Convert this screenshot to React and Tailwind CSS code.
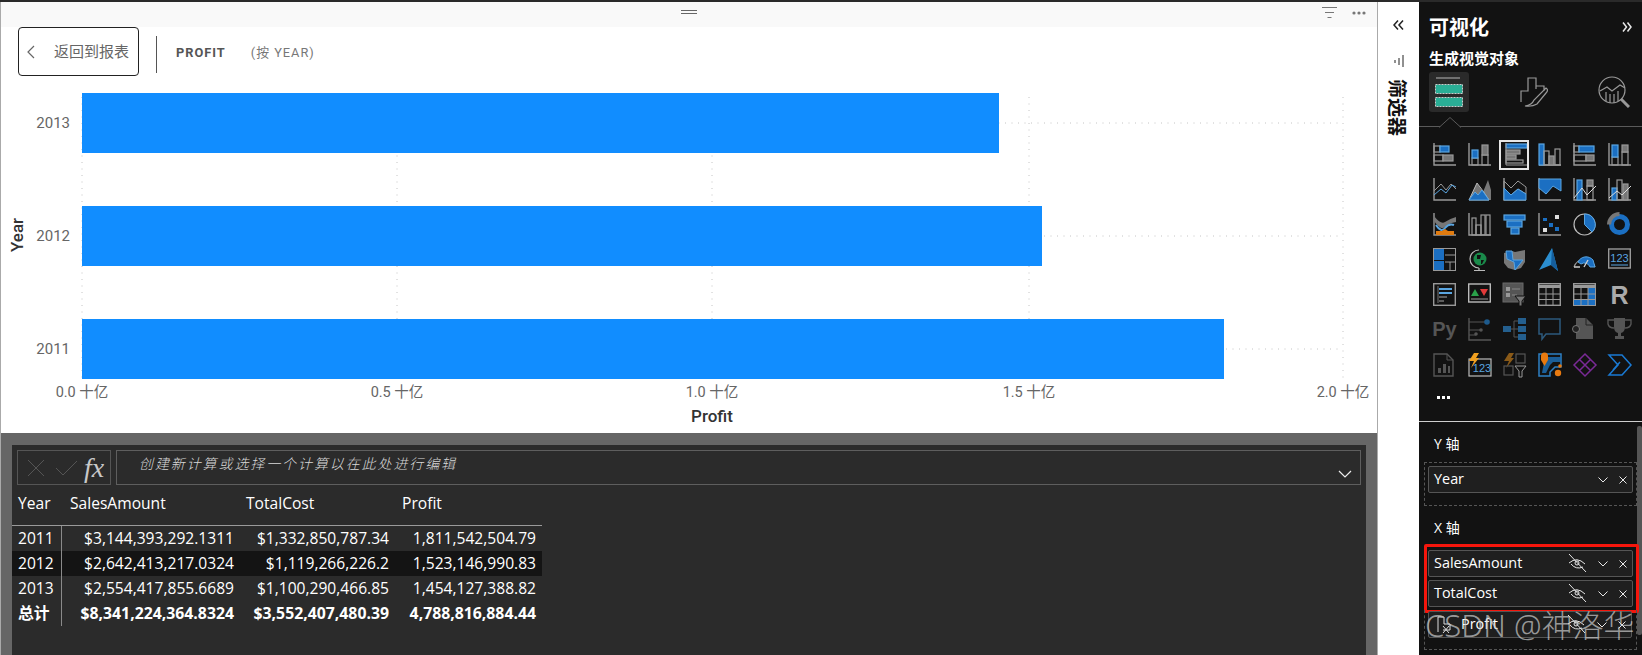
const G = '#999999', F = '#777777', B = '#1b6fc2', L = '#5aa5e0', D = '#555555';
const sans = "font-['Open_Sans','Noto_Sans_CJK_SC',sans-serif]";

const Ax = () => <path d="M1 0V22H23" fill="none" stroke={G} strokeWidth="1.4" />;
const R = ({ x, y, w, h, f = 'none', s = G }) => <rect x={x} y={y} width={w} height={h} fill={f} stroke={s} strokeWidth="1.2" />;

const icons = [
  <><Ax /><R x={1} y={3} w={6} h={6} /><R x={7} y={3} w={9} h={6} f={B} s={L} /><R x={1} y={12} w={9} h={6} /><R x={10} y={12} w={10} h={6} f={F} /></>,
  <><Ax /><R x={4} y={15} w={6} h={7} /><R x={4} y={7} w={6} h={8} f={B} s={L} /><R x={14} y={12} w={6} h={10} /><R x={14} y={2} w={6} h={10} f={F} /></>,
  <><R x={3} y={1} w={21} h={4} f={B} s={L} /><R x={3} y={7} w={14} h={4} f={F} /><R x={3} y={12} w={10} h={4} f={F} /><R x={3} y={17} w={17} h={3} /><path d="M3 0V22H25" fill="none" stroke={G} strokeWidth="1" /></>,
  <><path d="M1 22H23" stroke="#ccc" strokeWidth="1.2" /><R x={1} y={1} w={5} h={21} f={B} s={L} /><R x={6} y={8} w={5} h={14} /><R x={11} y={13} w={5} h={9} f={F} /><R x={17} y={6} w={5} h={16} /></>,
  <><Ax /><R x={1} y={3} w={5} h={6} /><R x={6} y={3} w={15} h={6} f={B} s={L} /><R x={1} y={12} w={12} h={6} /><R x={13} y={12} w={8} h={6} f={F} /></>,
  <><Ax /><R x={4} y={14} w={6} h={8} /><R x={4} y={2} w={6} h={12} f={B} s={L} /><R x={14} y={9} w={6} h={13} /><R x={14} y={2} w={6} h={7} f={F} /></>,
  <><Ax /><path d="M1 13L8 6L13 12L18 6L23 11" fill="none" stroke={G} /><path d="M1 17L8 11L13 15L19 7L23 9" fill="none" stroke={L} /></>,
  <><path d="M1 22L9 5L15 14L20 2L23 12V22Z" fill={F} /><path d="M1 22L9 5L15 13L21 22Z" fill="none" stroke="#bbb" /><path d="M1 22L7 14L10 17L14 12L21 22Z" fill={B} stroke={L} /></>,
  <><Ax /><path d="M1 3L8 10L15 3L23 9V16L15 11L8 17L1 10Z" fill="none" stroke={G} /><path d="M1 10L8 17L15 11L23 16V22H1Z" fill={B} stroke={L} /></>,
  <><Ax /><path d="M1 1H23V13L15 8L8 16L1 10Z" fill={B} stroke={L} /></>,
  <><Ax /><R x={4} y={2} w={5} h={20} f={B} s={L} /><R x={14} y={2} w={6} h={6} f={F} /><R x={14} y={8} w={6} h={14} /><path d="M1 20L9 10L14 17L23 8" fill="none" stroke="#ddd" /></>,
  <><Ax /><R x={4} y={10} w={5} h={12} f={B} s={L} /><R x={9} y={2} w={5} h={20} /><R x={15} y={6} w={5} h={16} f={F} /><path d="M1 20L9 13L14 17L23 8" fill="none" stroke="#ddd" /></>,
  <><Ax /><path d="M1 3Q8 12 12 9T23 4V9Q16 10 12 14T1 8Z" fill={F} /><path d="M3 12Q8 20 12 15T21 12" fill="none" stroke={L} strokeWidth="2" /><path d="M3 18H9L12 16L15 18H21V22H3Z" fill="#e07b10" /></>,
  <><Ax /><R x={4} y={5} w={4} h={17} /><R x={8} y={12} w={5} h={10} /><R x={13} y={2} w={4} h={20} /><R x={18} y={2} w={4} h={20} /></>,
  <><R x={1} y={2} w={21} h={5} f={B} s={L} /><R x={4} y={8} w={15} h={6} f={B} s={L} /><R x={8} y={15} w={8} h={6} f={B} s={L} /></>,
  <><Ax /><rect x={5} y={5} width={4} height={3} fill={B} /><rect x={11} y={10} width={4} height={4} fill={B} /><rect x={17} y={2} width={4} height={4} fill="#ddd" /><rect x={5} y={15} width={4} height={4} fill="#ddd" /><rect x={17} y={14} width={4} height={4} fill={B} /></>,
  <><circle cx="11.5" cy="11.5" r="10.5" fill="none" stroke="#bbb" strokeWidth="1.2" /><path d="M11.5 1A10.5 10.5 0 0 1 19 19L11.5 11.5Z" fill={B} stroke={L} /></>,
  <><circle cx="11.5" cy="11.5" r="8" fill="none" stroke={B} strokeWidth="5" /><path d="M11.5 1A10.5 10.5 0 0 0 1 11.5" fill="none" stroke={F} strokeWidth="4" /></>,
  <><rect x="0.5" y="0.5" width="22" height="22" fill="none" stroke={G} /><rect x="1" y="1" width="10" height="11" fill={B} /><rect x="1" y="13" width="10" height="9" fill={B} /><path d="M12 7H22M12 14H22M17 14V22" stroke={G} fill="none" /></>,
  <><circle cx="12" cy="11" r="6.5" fill="#1a8a4a" /><path d="M9 7H13L12 11H9ZM13 12H16L14 16H13Z" fill="#111" /><path d="M11 2A9 9 0 0 0 11 20M11 20V22M6 22.500H17" fill="none" stroke="#bbb" strokeWidth="1.2" /></>,
  <><path d="M1 5L9 3L12 4L22 2V14L18 20L12 22L5 20L1 15Z" fill={F} /><path d="M3 3H9L10 12L20 12L12 22L11 14L4 11Z" fill={B} stroke={L} /></>,
  <><path d="M14 0L20 23L13 17L1 22Z" fill="#2b8ed0" /><path d="M14 0L13 17L20 23Z" fill="#155e9c" /></>,
  <><path d="M1 19A11 11 0 0 1 22 19" fill="none" stroke={G} strokeWidth="1.2" /><path d="M5 14A9 9 0 0 1 20 12L22 19H17A6 6 0 0 0 8 16Z" fill={B} stroke={L} /><path d="M1 19H7M11 19L15 12" stroke="#ccc" strokeWidth="1.4" fill="none" /></>,
  <><rect x="0.7" y="1" width="21.600" height="19" fill="none" stroke={G} strokeWidth="1.4" /><path d="M3 17H20" stroke={L} /><text x="11.500" y="14" textAnchor="middle" fontSize="11" fill={L} fontFamily="Liberation Sans">123</text></>,
  <><rect x="0.7" y="0.7" width="21.600" height="21.600" fill="none" stroke={G} strokeWidth="1.4" /><path d="M5 3V20" stroke={F} /><path d="M6 6H19M6 10H19" stroke={L} strokeWidth="2" /><path d="M6 14H14M6 18H11" stroke={F} strokeWidth="1.500" /></>,
  <><rect x="0.7" y="1" width="21.600" height="18" fill="none" stroke="#bbb" strokeWidth="1.4" /><path d="M3 13L7 6L11 13Z" fill="#2aa14a" /><path d="M12 6H20L16 13Z" fill="#e23a3a" /><path d="M3 16H20" stroke={G} /></>,
  <><rect x="0" y="0" width="20" height="19" fill={D} stroke="#6a6a6a" /><rect x="3" y="4" width="4" height="4" fill={G} /><rect x="3" y="10" width="4" height="4" fill={G} /><path d="M9 6H17M9 12H14" stroke={F} strokeWidth="1.500" /><path d="M12 13H23L19 18V23L16 23V18Z" fill="#777" stroke="#111" /></>,
  <><rect x="0.7" y="0.7" width="21.600" height="21.600" fill="none" stroke={G} strokeWidth="1.4" /><path d="M1 3.500H22" stroke={G} strokeWidth="3" /><path d="M1 11H22M1 16.500H22M8 5V22M15 5V22" stroke={G} fill="none" /></>,
  <><rect x="0.7" y="0.7" width="21.600" height="21.600" fill="none" stroke={G} strokeWidth="1.4" /><path d="M1 3.500H22" stroke={G} strokeWidth="3" /><rect x="15" y="5" width="7" height="17" fill={B} /><rect x="1" y="16" width="21" height="6" fill={B} /><path d="M1 11H22M1 16.500H22M8 5V22M15 5V22" stroke={G} fill="none" /></>,
  <text x="11.500" y="21" textAnchor="middle" fontSize="25" fontWeight="700" fill="#aaa" fontFamily="Liberation Sans">R</text>,
  <text x="11.500" y="18" textAnchor="middle" fontSize="20" fontWeight="700" fill="#555" fontFamily="Liberation Sans">Py</text>,
  <><path d="M1 0V22H23" fill="none" stroke={D} strokeWidth="1.4" /><path d="M1 4H18M1 12H13M1 17H8" stroke={D} /><circle cx="19" cy="4" r="2.800" fill="#1d5a8c" /><circle cx="13" cy="12" r="1.800" fill={D} /><circle cx="8" cy="16" r="1.800" fill={D} /></>,
  <><rect x="0" y="8" width="8" height="6" fill="#245f8e" /><rect x="15" y="0" width="8" height="6" fill="#245f8e" /><rect x="15" y="8" width="8" height="6" fill="#245f8e" /><rect x="15" y="16" width="8" height="6" fill="#245f8e" /><path d="M8 11H15M11 3V19M11 3H15M11 19H15" stroke={D} fill="none" /></>,
  <path d="M1 1H22V16H8L4 21V16H1Z" fill="none" stroke="#2d5a7d" strokeWidth="1.500" />,
  <><path d="M3 0H13L20 7V21H3Z" fill={D} /><path d="M13 0V7H20" fill="none" stroke="#222" /><circle cx="3" cy="11" r="3.500" fill="#222" stroke="#777" /></>,
  <><path d="M6 0H17V9Q17 14 13 15V18H16V21H7V18H10V15Q6 14 6 9Z" fill={D} /><path d="M6 2H0V6Q1 10 6 10M17 2H23V6Q22 10 17 10" fill="none" stroke={D} strokeWidth="1.400" /></>,
  <><path d="M1 1H14L20 7V23H1Z" fill="none" stroke={D} strokeWidth="1.400" /><path d="M14 1V7H20" fill="none" stroke={D} /><path d="M5 20V15H8V20ZM10 20V11H13V20ZM15 20V13H17V20Z" fill={D} /></>,
  <><rect x="1" y="6" width="22" height="17" fill="none" stroke="#bbb" strokeWidth="1.200" /><text x="14" y="19" textAnchor="middle" fontSize="11" fill={L} fontFamily="Liberation Sans">123</text><path d="M6 0H11L8 5H11L3 15L6 8H1Z" fill="#f0a020" /></>,
  <><path d="M6 0H11L8 5H11L3 15L6 8H1Z" fill="#8a5a18" /><rect x="13" y="1" width="9" height="9" fill="none" stroke={D} strokeWidth="1.200" /><rect x="1" y="13" width="9" height="9" fill="none" stroke={D} strokeWidth="1.200" /><path d="M12 13H23L19 18V24H16V18Z" fill="#111" stroke="#999" /></>,
  <><path d="M1 1H23V14H17L12 19V23H1Z" fill="none" stroke="#2e80c4" strokeWidth="1.500" /><path d="M7 4H23V9H15L12 12L8 20H4Z" fill="#1d6cb0" opacity=".85" /><path d="M3 3A3.500 3.500 0 0 1 10 3V7L6.500 13L3 7Z" fill="#e87a10" /><circle cx="20" cy="20" r="3.200" fill="#e87a10" /><circle cx="22" cy="13" r="1.800" fill="#e87a10" /></>,
  <path d="M12 1L23 12L12 23L1 12ZM6.500 6.500L17.500 17.500M17.500 6.500L6.500 17.500" fill="none" stroke="#7a2a96" strokeWidth="1.500" />,
  <path d="M1 2H14L23 12L14 22H1L10 12ZM5 17L12 9" fill="none" stroke="#1a7ad4" strokeWidth="1.500" />,
];

function Icon({ children, selected }) {
  return (
    <div className="relative w-[23px] h-[23px]">
      {selected && <div className="absolute -left-[4px] -top-[3px] w-[30px] h-[30px] border-2 border-[#e6e6e6]" />}
      <svg width="23" height="24" viewBox="0 0 23 24" className="overflow-visible block">{children}</svg>
    </div>
  );
}

function Field({ name, hidden, prefix }) {
  return (
    <div className="h-[27px] flex items-center rounded-[2px] border border-[#555] bg-[#1f1f1f] text-[14.400px] text-white pl-[5px]">
      {prefix && (
        <svg width="18" height="18" viewBox="0 0 18 18" fill="none" stroke="#ddd" className="mr-[9px]"><path d="M4 1H10V8H16V14H9M4 1V16M9 10L15 17M15 10L9 17" /></svg>
      )}
      <span className="flex-1 leading-none">{name}</span>
      {hidden && (
        <svg width="19" height="19" viewBox="0 0 19 19" fill="none" stroke="#e8e8e8" strokeWidth="1" className="mr-[11px]">
          <path d="M1 0L18 18M1 9Q9 2 17 10M3 10Q8 16 15 13" />
          <circle cx="9" cy="9" r="2" />
        </svg>
      )}
      <svg width="10" height="6" viewBox="0 0 10 6" fill="none" stroke="#e8e8e8" className="mr-[11px]"><path d="M0.500 0.500L5 5L9.500 0.500" /></svg>
      <svg width="8" height="8" viewBox="0 0 8 8" fill="none" stroke="#e8e8e8" className="mr-[5px]"><path d="M0.500 0.500L7.500 7.500M7.500 0.500L0.500 7.500" /></svg>
    </div>
  );
}

const rows = [
  ['2011', '$3,144,393,292.1311', '$1,332,850,787.34', '1,811,542,504.79'],
  ['2012', '$2,642,413,217.0324', '$1,119,266,226.2', '1,523,146,990.83'],
  ['2013', '$2,554,417,855.6689', '$1,100,290,466.85', '1,454,127,388.82'],
  ['总计', '$8,341,224,364.8324', '$3,552,407,480.39', '4,788,816,884.44'],
];

function DataTable() {
  return (
    <div className={`w-[530px] text-[15.600px] text-white ${sans}`}>
      <div className="h-[41px] pb-[2px] flex items-center border-b border-[#9a9a9a]">
        <span className="w-[58px] pl-[6px]">Year</span>
        <span className="w-[176px]">SalesAmount</span>
        <span className="w-[156px]">TotalCost</span>
        <span>Profit</span>
      </div>
      {rows.map((r, i) => (
        <div key={r[0]} className={`h-[25px] flex items-center ${i === 1 ? 'bg-[#141414]' : ''} ${i === 3 ? 'font-bold text-[15.800px]' : ''}`}>
          <span className="w-[50px] h-full flex items-center pl-[6px] border-r border-[#8a8a8a]">{r[0]}</span>
          <span className="w-[172px] text-right whitespace-nowrap">{r[1]}</span>
          <span className="w-[155px] text-right whitespace-nowrap">{r[2]}</span>
          <span className="w-[147px] text-right whitespace-nowrap">{r[3]}</span>
        </div>
      ))}
    </div>
  );
}

function Chart() {
  const ticks = [[81, '0.0 十亿'], [396, '0.5 十亿'], [711, '1.0 十亿'], [1028, '1.5 十亿'], [1342, '2.0 十亿']];
  const bars = [['2013', 93, 998], ['2012', 206, 1041], ['2011', 319, 1223]];
  const font = "Roboto, 'Noto Sans CJK SC', sans-serif";
  return (
    <svg width="1377" height="348" viewBox="0 85 1377 348" className="block" fontFamily={font}>
      {ticks.map(([x]) => <path key={x} d={`M${x} 97V382`} stroke="#c4c4c4" strokeDasharray="1 5.500" />)}
      {bars.map(([, y]) => <path key={y} d={`M81 ${y + 30}H1342`} stroke="#c4c4c4" strokeDasharray="1 5.500" />)}
      {bars.map(([l, y, e]) => (
        <g key={l}>
          <rect x="81" y={y} width={e - 81} height="60" fill="#118DFF" />
          <text x="69" y={y + 35} textAnchor="end" fontSize="15" fill="#666">{l}</text>
        </g>
      ))}
      {ticks.map(([x, l]) => <text key={l} x={x} y="397" textAnchor="middle" fontSize="14.500" fill="#666">{l}</text>)}
      <text x="711" y="422" textAnchor="middle" fontSize="17" fontWeight="500" fill="#333">Profit</text>
      <text transform="translate(22 235) rotate(-90)" textAnchor="middle" fontSize="17" fontWeight="500" fill="#333">Year</text>
    </svg>
  );
}

export default function App() {
  return (
    <div className={`relative w-[1642px] h-[655px] overflow-hidden flex bg-white border-t-2 border-[#2a2a2a] ${sans}`}>
      {/* report + table */}
      <div className="w-[1378px] h-full flex flex-col border-l border-r border-[#aaaaaa]">
        <div className="h-[25px] bg-[#f9f9f9] flex items-start shrink-0">
          <div className="flex-1 flex pl-[680px] pt-[8px]">
            <svg width="16" height="5" viewBox="0 0 16 5" stroke="#666"><path d="M0 0.500H16M0 3.500H16" /></svg>
          </div>
          <div className="flex items-center pr-[11px] pt-[5px] gap-[15px]">
            <svg width="15" height="12" viewBox="0 0 15 12" stroke="#777"><path d="M0 0.500H15M3 5.500H12M5.500 10.500H9.500" /></svg>
            <svg width="14" height="4" viewBox="0 0 14 4" fill="#777"><circle cx="2" cy="2" r="1.600" /><circle cx="7" cy="2" r="1.600" /><circle cx="12" cy="2" r="1.600" /></svg>
          </div>
        </div>
        <div className="h-[58px] shrink-0 flex items-start pl-[17px]">
          <div className="w-[121px] h-[49px] rounded-[4px] border border-[#222] flex items-center pl-[8px] text-[15px] text-[#666] font-['Noto_Sans_CJK_SC',sans-serif]">
            <svg width="8" height="14" viewBox="0 0 8 14" fill="none" stroke="#666" strokeWidth="1.200"><path d="M7 1L1 7L7 13" /></svg>
            <span className="ml-[19px] whitespace-nowrap">返回到报表</span>
          </div>
          <div className="w-px h-[37px] bg-[#555] ml-[17px] mt-[9px]" />
          <div className="h-[51px] flex items-center ml-[19px] text-[12.800px] tracking-[1px] text-[#555] font-['Roboto','Noto_Sans_CJK_SC',sans-serif] whitespace-nowrap">
            <span className="font-bold">PROFIT</span>
            <span className="ml-[25px] text-[#777]">(按 YEAR)</span>
          </div>
        </div>
        <Chart />
        <div className="flex-1 bg-[#666666] pt-[12px] px-[11px] min-h-0">
          <div className="h-full bg-[#2b2b2b] pt-[5px]">
            <div className="flex h-[35px] pl-[5px] pr-[5px] gap-[5px]">
              <div className="w-[94px] border border-[#555] flex items-center pl-[9px] shrink-0">
                <svg width="18" height="18" viewBox="0 0 18 18" stroke="#555" fill="none"><path d="M1 1L17 17M17 1L1 17" /></svg>
                <svg width="23" height="16" viewBox="0 0 23 16" stroke="#555" fill="none" className="ml-[10px]"><path d="M1 8L8 15L22 1" /></svg>
                <span className="text-[#c8c8c8] text-[28px] ml-[6px] leading-none font-['Liberation_Serif',serif] italic">fx</span>
              </div>
              <div className="flex-1 border border-[#5e5e5e] relative flex items-start pl-[22px] pt-[2px] text-[14px] italic tracking-[1.900px] text-[#d8d8d8] font-['Noto_Sans_CJK_SC',sans-serif] font-light">
                <span>创建新计算或选择一个计算以在此处进行编辑</span>
                <svg width="14" height="8" viewBox="0 0 14 8" fill="none" stroke="#eee" strokeWidth="1.200" className="absolute right-[8px] top-[19px]"><path d="M1 1L7 7L13 1" /></svg>
              </div>
            </div>
            <DataTable />
          </div>
        </div>
      </div>

      {/* filter rail */}
      <div className="w-[41px] shrink-0 flex flex-col items-center pt-[18px] text-[#111] font-['Noto_Sans_CJK_SC',sans-serif]">
        <svg width="11" height="10" viewBox="0 0 11 10" fill="none" stroke="#222" strokeWidth="1.500"><path d="M5 0.500L1 5L5 9.500M10 0.500L6 5L10 9.500" /></svg>
        <svg width="10" height="12" viewBox="0 0 10 12" stroke="#222" className="mt-[25px]"><path d="M1 5V8M5 3V10M9 0V12" /></svg>
        <span className="mt-[12px] text-[19px] font-bold leading-[19px] [writing-mode:vertical-rl] [text-orientation:sideways]">筛选器</span>
      </div>

      {/* visual panel */}
      <div className="flex-1 bg-[#121212] flex flex-col text-white relative">
        <div className="absolute right-0 top-[424px] w-[5px] h-[209px] bg-[#555] rounded-[2px]" />
        <div className="h-[420px] shrink-0 border-b border-[#cfcfcf] flex flex-col">
          <div className="flex items-center justify-between h-[30px] mt-[10px] pl-[10px] pr-[10px] font-['Noto_Sans_CJK_SC',sans-serif]">
            <span className="text-[20px] font-bold">可视化</span>
            <svg width="10" height="10" viewBox="0 0 10 10" fill="none" stroke="#e8e8e8" strokeWidth="1.500"><path d="M1 0.500L4.500 5L1 9.500M5.500 0.500L9 5L5.500 9.500" /></svg>
          </div>
          <div className="pl-[10px] mt-[6px] text-[15px] font-bold leading-[20px] font-['Noto_Sans_CJK_SC',sans-serif]">生成视觉对象</div>
          <div className="flex items-center h-[40px] mt-[4px] pl-[10px]">
            <div className="w-[40px] h-[40px] rounded-[3px] bg-[#2a2a2a] flex items-center justify-center">
              <svg width="30" height="34" viewBox="0 0 30 34">
                <path d="M2 3H26" stroke="#888" strokeWidth="1.500" />
                <rect x="1.500" y="9.500" width="27" height="9" fill="#2aae96" stroke="#ccc" strokeDasharray="2 1" />
                <rect x="1.500" y="22.500" width="27" height="9" fill="#2aae96" stroke="#ccc" strokeDasharray="2 1" />
              </svg>
            </div>
            <svg width="28" height="30" viewBox="0 0 28 30" fill="none" stroke="#999" strokeWidth="1.200" className="ml-[51px]">
              <path d="M1 25V14H8V1H16V12M16 9H24V14M5 29Q12 28 14 23L26 11Q29 13 26 16L17 27Q12 30 5 29Z" />
            </svg>
            <svg width="32" height="32" viewBox="0 0 32 32" fill="none" stroke="#999" strokeWidth="1.200" className="ml-[50px]">
              <circle cx="14" cy="14" r="13" />
              <path d="M2 15L9 11L14 15L22 9L27 12M8 16V25M12 18V27M16 18V27M20 15V25" />
              <path d="M23 23L31 31" strokeWidth="3" />
            </svg>
          </div>
          <div className="relative h-[15px] border-b border-[#5a5a5a] shrink-0">
            <svg width="22" height="11" viewBox="0 0 22 11" fill="#121212" stroke="#5a5a5a" className="absolute left-[20px] top-[5px]"><path d="M0 10.500L11 0.500L22 10.500" /></svg>
          </div>
          <div className="pl-[14px] pt-[16px] grid grid-cols-[repeat(6,23px)] gap-x-[12px] gap-y-[12px]">
            {icons.map((ic, i) => <Icon key={i} selected={i === 2}>{ic}</Icon>)}
          </div>
          <div className="pl-[18px] mt-[20px] flex gap-[2px]">
            {[0, 1, 2].map(i => <span key={i} className="w-[3px] h-[3px] bg-white" />)}
          </div>
        </div>

        <div className={`pl-[5px] pr-[5px] flex-1 relative ${sans}`}>
          <div className="pl-[10px] text-[14px] mt-[12px] leading-[20px]">Y 轴</div>
          <div className="mt-[8px] border border-dashed border-[#555] p-[3px] h-[44px]"><Field name="Year" /></div>
          <div className="pl-[10px] text-[14px] mt-[12px] leading-[20px]">X 轴</div>
          <div className="mt-[6px] -mr-[2px] border-[3px] border-[#f5160c] rounded-[2px] pl-[1px] pr-[3px] py-[3px] flex flex-col gap-[3px]">
            <Field name="SalesAmount" hidden />
            <Field name="TotalCost" hidden />
          </div>
          <div className="mt-[-3px] border border-dashed border-[#555] border-t-0 pl-[3px] pr-[4px] pb-[10px] pt-[1px] h-[40px]"><Field name="Profit" hidden prefix /></div>
        </div>
        <div className="absolute left-[6px] top-[606px] text-[31px] whitespace-nowrap text-[#cfcfcf]/70 font-['Noto_Sans','Noto_Sans_CJK_SC',sans-serif] font-light leading-[34px]">CSDN @神洛华</div>
      </div>
    </div>
  );
}
